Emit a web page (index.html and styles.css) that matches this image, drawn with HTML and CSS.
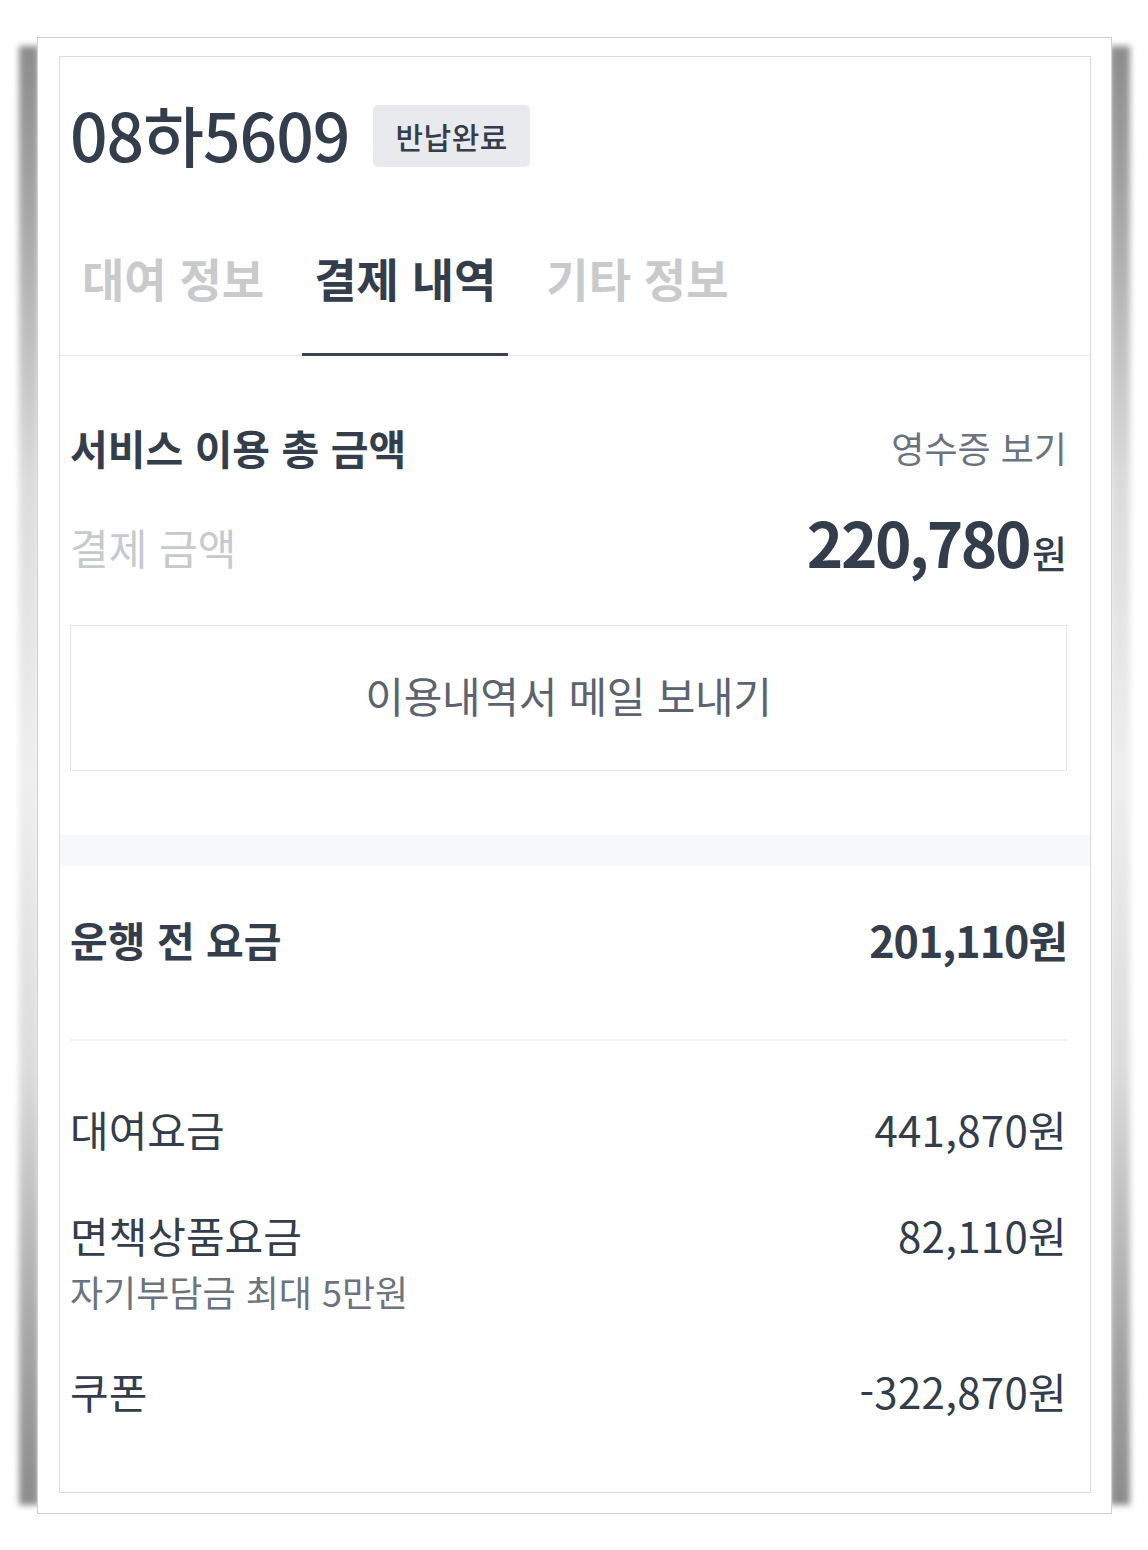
FILE: index.html
```html
<!DOCTYPE html>
<html lang="ko">
<head>
    <meta charset="UTF-8">
    <meta name="viewport" content="width=device-width, initial-scale=1.0">
    <title>결제 내역</title>
    <link rel="stylesheet" href="styles.css">
</head>
<body>
    <div class="frame">
        <div class="card">
            <div class="header">
                <h1 class="plate">08하5609</h1>
                <span class="badge">반납완료</span>
            </div>

            <div class="tabs">
                <div class="tab">대여 정보</div>
                <div class="tab active">결제 내역</div>
                <div class="tab">기타 정보</div>
            </div>

            <div class="summary">
                <div class="row">
                    <div class="row-title">서비스 이용 총 금액</div>
                    <a class="receipt">영수증 보기</a>
                </div>
                <div class="row total-row">
                    <div class="total-label">결제 금액</div>
                    <div class="total-amount">220,780<span class="won">원</span></div>
                </div>
                <button class="mail-button">이용내역서 메일 보내기</button>
            </div>

            <div class="band"></div>

            <div class="details">
                <div class="row">
                    <div class="row-title">운행 전 요금</div>
                    <div class="row-amount">201,110원</div>
                </div>
                <div class="divider"></div>
                <div class="charges">
                    <div class="charge">
                        <div class="charge-label">대여요금</div>
                        <div class="charge-amount">441,870원</div>
                    </div>
                    <div class="charge">
                        <div>
                            <div class="charge-label">면책상품요금</div>
                            <div class="charge-sub">자기부담금 최대 5만원</div>
                        </div>
                        <div class="charge-amount">82,110원</div>
                    </div>
                    <div class="charge">
                        <div class="charge-label">쿠폰</div>
                        <div class="charge-amount">-322,870원</div>
                    </div>
                </div>
            </div>
        </div>
    </div>
</body>
</html>
```

FILE: styles.css
```css
body { margin: 0; background: #fff; font-family: "Noto Sans CJK KR", "Noto Sans", sans-serif; color: #333d4b; }

/* photo frame round the screenshot */
.frame {
    position: relative;
    box-sizing: border-box;
    width: 1075px;
    height: 1477px;
    margin: 37px 0 0 37px;
    padding: 18px 20px 20px 21px;
    background: #fff;
    border: 1px solid #cfcfcf;
}
.frame::before,
.frame::after {
    content: '';
    position: absolute;
    top: 8px;
    bottom: 8px;
    width: 20px;
    z-index: -1;
    background: linear-gradient(to bottom, #8c8c8c 0, #a8a8a8 12%, #dcdcdc 30%, #efefef 50%, #dcdcdc 70%, #a8a8a8 88%, #8c8c8c 100%);
    filter: blur(3px);
}
.frame::before { left: -19px; }
.frame::after { right: -19px; }

.card {
    box-sizing: border-box;
    height: 100%;
    border: 1px solid #dcdcdc;
    background: #fff;
    overflow: hidden;
}

.header { display: flex; align-items: center; gap: 24px; padding: 48px 23px 0 10px; height: 62px; }
.plate { margin: 0; font-size: 66px; font-weight: 500; letter-spacing: -1px; line-height: 62px; position: relative; top: -3px; }
.badge {
    display: inline-flex;
    align-items: center;
    height: 62px;
    padding: 0 22px;
    border-radius: 5px;
    background: #e8eaed;
    font-size: 30px;
    font-weight: 500;
    letter-spacing: 0.5px;
}

.tabs { display: flex; gap: 26px; margin-top: 80px; padding-left: 10px; border-bottom: 1px solid #e6e6e6; }
.tab {
    padding: 0 12px 46px;
    font-size: 46px;
    font-weight: 700;
    line-height: 60px;
    color: #c9cacc;
    border-bottom: 3px solid transparent;
    margin-bottom: -1px;
}
.tab.active { color: #333d4b; border-bottom-color: #3b4350; }

.summary { padding: 66px 23px 64px 10px; }
.row { display: flex; justify-content: space-between; align-items: center; }
.row-title { font-size: 41px; font-weight: 700; line-height: 50px; }
.receipt { font-size: 36px; color: #6b7380; line-height: 50px; }
.total-row { margin-top: 34px; height: 80px; }
.total-label { font-size: 42px; color: #c6c9cd; }
.total-amount { font-size: 62px; font-weight: 700; letter-spacing: -2.5px; line-height: 80px; }
.won { font-size: 38px; font-weight: 500; letter-spacing: 0; margin-left: 3px; }

.mail-button {
    display: block;
    width: 100%;
    height: 146px;
    margin-top: 39px;
    padding: 0 0 8px;
    border: 1px solid #e3e4e6;
    background: #fff;
    font-family: inherit;
    font-size: 42px;
    color: #5b6370;
    letter-spacing: -0.3px;
}

.band { height: 31px; background: #f7f8fa; }

.details { padding: 43px 23px 0 10px; }
.details .row { height: 60px; }
.row-amount { font-size: 43px; font-weight: 700; letter-spacing: -1px; }
.divider { height: 2px; margin-top: 70px; background: #efefef; }

.charges { display: flex; flex-direction: column; gap: 50px; margin-top: 60px; }
.charge { display: flex; justify-content: space-between; align-items: flex-start; }
.charge-label { font-size: 42px; line-height: 56px; }
.charge-amount { font-size: 42px; line-height: 56px; letter-spacing: 0.3px; }
.charge-sub { margin-top: 6px; font-size: 36px; line-height: 44px; color: #6b7380; }
```
